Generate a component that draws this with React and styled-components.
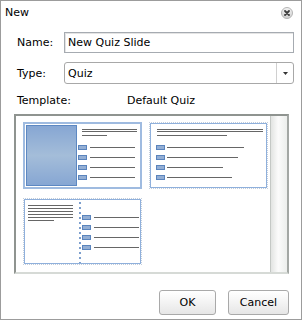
import React from "react";
import styled, { createGlobalStyle } from "styled-components";

const GlobalStyle = createGlobalStyle`
  html, body {
    margin: 0;
    padding: 0;
    background: #fff;
  }
  body {
    font-family: "DejaVu Sans", "Liberation Sans", sans-serif;
    font-size: 11px;
    color: #000;
  }
`;

const Window = styled.div`
  width: 302px;
  height: 320px;
  box-sizing: border-box;
  border: 1px solid #9c9c9c;
  background: #fff;
  display: flex;
  flex-direction: column;
`;

const TitleBar = styled.div`
  height: 23px;
  display: flex;
  align-items: center;
  justify-content: space-between;
  padding: 0 8px 0 4px;
`;

const Title = styled.span`
  font-size: 11px;
`;

const CloseButton = styled.button`
  width: 12px;
  height: 12px;
  padding: 0;
  border: none;
  background: none;
  display: flex;
  cursor: pointer;
`;

const Form = styled.div`
  display: flex;
  flex-direction: column;
  padding: 8px 7px 0 16px;
  gap: 9px;
`;

const FieldRow = styled.div`
  display: grid;
  grid-template-columns: 47px 1fr;
  align-items: center;
`;

const Label = styled.label`
  white-space: nowrap;
`;

const TextInput = styled.input`
  box-sizing: border-box;
  height: 21px;
  width: 100%;
  margin: 0;
  padding: 0 3px;
  border: 1px solid #a6abb1;
  box-shadow: inset 1px 1px 0 #e4e4e4;
  font-family: "DejaVu Sans", "Liberation Sans", sans-serif;
  font-size: 11px;
  color: #000;
  outline: none;
`;

const SelectBox = styled.div`
  box-sizing: border-box;
  height: 22px;
  display: flex;
  align-items: stretch;
  border: 1px solid #a8a8a8;
  border-radius: 3px;
  background: #fff;
`;

const SelectValue = styled.span`
  flex: 1;
  display: flex;
  align-items: center;
  padding-left: 3px;
`;

const ArrowCell = styled.span`
  width: 16px;
  border-left: 1px solid #d0d0d0;
  display: flex;
  align-items: center;
  justify-content: center;
`;

const TemplateRow = styled.div`
  display: flex;
  margin: 9px 0 0 16px;
  height: 14px;
  align-items: center;
`;

const TemplateName = styled.span`
  margin-left: 56px;
`;

const ListBox = styled.div`
  box-sizing: border-box;
  width: 275px;
  height: 160px;
  margin: 7px 0 0 13px;
  border-style: solid;
  border-width: 2px;
  border-color: #8f9490 #a3a7a4 #d6dad6 #8f9490;
  display: flex;
`;

const ThumbGrid = styled.div`
  flex: 1;
  display: grid;
  grid-template-columns: 119px 119px;
  grid-auto-rows: 67px;
  column-gap: 7px;
  row-gap: 9px;
  padding: 6px 0 0 7px;
  align-content: start;
`;

const Thumb = styled.div`
  box-sizing: border-box;
  width: 119px;
  height: 67px;
  display: flex;
  border: ${(p) => (p.$selected ? "2px solid #9fbbe0" : "1px dotted #c4cedb")};
`;

const ThumbInner = styled.div`
  flex: 1;
  display: flex;
  border: 1px solid ${(p) => (p.$selected ? "#fff" : "#8fb0dc")};
  background: #fff;
`;

const ScrollTrack = styled.div`
  width: 16px;
  border-left: 1px solid #c4c8c5;
  background: linear-gradient(to right, #e2e4e2, #fbfbfb 45%, #eceeec);
`;

const ButtonRow = styled.div`
  margin-top: auto;
  display: flex;
  justify-content: flex-end;
  gap: 12px;
  padding: 0 12px 4px 0;
`;

const Button = styled.button`
  box-sizing: border-box;
  width: ${(p) => p.$w}px;
  height: 25px;
  margin: 0;
  padding: 0;
  border: 1px solid #a9a9a9;
  border-radius: 3px;
  background: linear-gradient(#ffffff, #f3f3f3 50%, #e6e6e6);
  font-family: "DejaVu Sans", "Liberation Sans", sans-serif;
  font-size: 11px;
  color: #000;
`;

const LINE = "#666";
const BULLET_FILL = "#93aed4";
const BULLET_STROKE = "#5a84bd";

function Bullet({ x, y }) {
  return (
    <rect x={x} y={y} width="8" height="4" fill={BULLET_FILL} stroke={BULLET_STROKE} />
  );
}

function Line({ x1, x2, y }) {
  return <line x1={x1} x2={x2} y1={y} y2={y} stroke={LINE} strokeWidth="1" />;
}

function SidePanelPreview() {
  const rows = [0, 1, 2, 3];
  return (
    <svg width="113" height="61" viewBox="0 0 113 61" shapeRendering="crispEdges">
      <defs>
        <linearGradient id="panel" x1="0" y1="0" x2="0" y2="1">
          <stop offset="0" stopColor="#86a6d3" />
          <stop offset="0.5" stopColor="#a4bdd9" />
          <stop offset="1" stopColor="#86a6d3" />
        </linearGradient>
      </defs>
      <rect x="0.5" y="0.5" width="50" height="60" fill="url(#panel)" stroke="#5d88c2" />
      <Line x1={56} x2={111} y={4.5} />
      <Line x1={56} x2={111} y={6.5} />
      <Line x1={56} x2={81} y={10.5} />
      {rows.map((i) => (
        <g key={i}>
          <Bullet x={52.5} y={20.5 + i * 10} />
          <Line x1={64} x2={109} y={22.5 + i * 10} />
        </g>
      ))}
    </svg>
  );
}

function BulletsPreview() {
  const ends = [93, 87, 72, 81];
  return (
    <svg width="115" height="63" viewBox="0 0 115 63" shapeRendering="crispEdges">
      <Line x1={6} x2={112} y={5.5} />
      <Line x1={6} x2={112} y={7.5} />
      <Line x1={6} x2={76} y={11.5} />
      {ends.map((end, i) => (
        <g key={i}>
          <Bullet x={5.5} y={21.5 + i * 10} />
          <Line x1={16} x2={end} y={23.5 + i * 10} />
        </g>
      ))}
    </svg>
  );
}

function TwoColumnPreview() {
  const text = [48, 48, 48, 48, 48, 29];
  const dots = Array.from({ length: 13 }, (_, i) => 2 + i * 5);
  const rows = [0, 1, 2, 3];
  return (
    <svg width="115" height="63" viewBox="0 0 115 63" shapeRendering="crispEdges">
      {text.map((end, i) => (
        <Line key={i} x1={3} x2={end} y={5.5 + i * 3} />
      ))}
      {dots.map((y) => (
        <rect key={y} x="54" y={y} width="2" height="2" fill="#7d9fcd" />
      ))}
      {rows.map((i) => (
        <g key={i}>
          <Bullet x={57.5} y={15.5 + i * 10} />
          <Line x1={69} x2={114} y={17.5 + i * 10} />
        </g>
      ))}
    </svg>
  );
}

function CloseIcon() {
  return (
    <svg width="12" height="12" viewBox="0 0 12 12">
      <defs>
        <linearGradient id="closeBg" x1="0" y1="0" x2="0" y2="1">
          <stop offset="0" stopColor="#f4f4f4" />
          <stop offset="1" stopColor="#cfcfcf" />
        </linearGradient>
      </defs>
      <circle cx="6" cy="6" r="5.5" fill="url(#closeBg)" stroke="#b4b4b4" />
      <path d="M4 4 L8 8 M8 4 L4 8" stroke="#3c3c3c" strokeWidth="1.8" strokeLinecap="round" />
    </svg>
  );
}

export default function App() {
  return (
    <>
      <GlobalStyle />
      <Window>
        <TitleBar>
          <Title>New</Title>
          <CloseButton aria-label="Close">
            <CloseIcon />
          </CloseButton>
        </TitleBar>

        <Form>
          <FieldRow>
            <Label>Name:</Label>
            <TextInput value="New Quiz Slide" readOnly />
          </FieldRow>
          <FieldRow>
            <Label>Type:</Label>
            <SelectBox>
              <SelectValue>Quiz</SelectValue>
              <ArrowCell>
                <svg width="5" height="3" viewBox="0 0 5 3">
                  <path d="M0 0 H5 L2.5 3 Z" fill="#333" />
                </svg>
              </ArrowCell>
            </SelectBox>
          </FieldRow>
        </Form>

        <TemplateRow>
          <span>Template:</span>
          <TemplateName>Default Quiz</TemplateName>
        </TemplateRow>

        <ListBox>
          <ThumbGrid>
            <Thumb $selected>
              <ThumbInner $selected>
                <SidePanelPreview />
              </ThumbInner>
            </Thumb>
            <Thumb>
              <ThumbInner>
                <BulletsPreview />
              </ThumbInner>
            </Thumb>
            <Thumb>
              <ThumbInner>
                <TwoColumnPreview />
              </ThumbInner>
            </Thumb>
          </ThumbGrid>
          <ScrollTrack />
        </ListBox>

        <ButtonRow>
          <Button $w={57}>OK</Button>
          <Button $w={61}>Cancel</Button>
        </ButtonRow>
      </Window>
    </>
  );
}
